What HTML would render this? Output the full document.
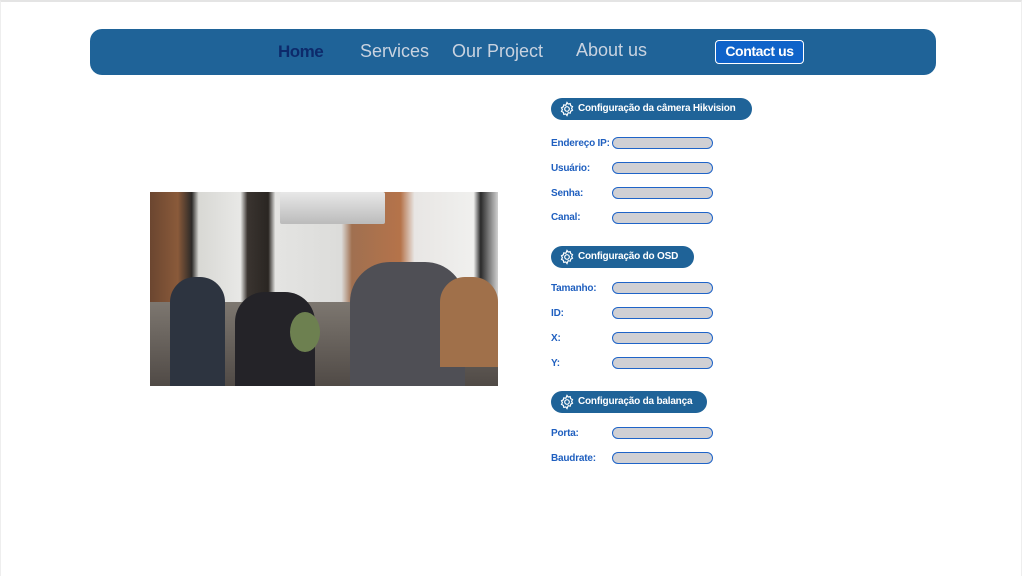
<!DOCTYPE html>
<html><head><style>
*{margin:0;padding:0;box-sizing:border-box}
body{width:1022px;height:576px;background:#fff;font-family:"Liberation Sans",sans-serif;position:relative;overflow:hidden}
.frame{position:absolute;left:0;top:0;width:1022px;height:576px;border-top:2px solid #e4e4e4;border-left:1px solid #eee;border-right:1px solid #eee}
.nav{position:absolute;left:90px;top:29px;width:846px;height:46px;background:#1f6398;border-radius:12px}
.nav span{position:absolute;top:12px;font-size:18px;color:#c9d3e0}
.home{color:#0d2a6b!important;font-weight:bold;font-size:17px!important;letter-spacing:-0.5px}
.contact{position:absolute;left:625px;top:11px;width:89px;height:24px;background:#0f63c9;border:1.5px solid #fff;border-radius:4px;color:#fff;font-weight:bold;font-size:14px;text-align:center;line-height:21px;letter-spacing:-0.4px}
.pill{position:absolute;left:551px;height:22px;background:#1f6398;border-radius:11px;color:#fff;font-weight:bold;font-size:10px;line-height:22px;padding-left:27px;letter-spacing:-0.2px}
.pill svg{position:absolute;left:8px;top:3px}
.lb{position:absolute;left:551px;font-size:10px;font-weight:bold;color:#1f5fbf;letter-spacing:-0.2px}
.in{position:absolute;left:612px;width:101px;height:12px;background:#d0d0d4;border:1.5px solid #1f64c8;border-radius:6px}
.photo{position:absolute;left:150px;top:192px;width:348px;height:194px;overflow:hidden;background:#8a7e74}
.photo div{position:absolute}
</style></head><body>
<div class="frame"></div>
<div class="nav">
<span class="home" style="left:188px;top:13px">Home</span>
<span style="left:270px">Services</span>
<span style="left:362px">Our Project</span>
<span style="left:486px;top:11px">About us</span>
<div class="contact">Contact us</div>
</div>

<div class="photo">
<div style="left:0;top:0;width:348px;height:120px;background:linear-gradient(90deg,#6b4630 0,#8a5a3a 8%,#2c2a28 12%,#d8d8d4 14%,#e8e8e6 26%,#3a3430 28%,#2a2622 34%,#e4e4e2 36%,#dcdcda 55%,#a07050 58%,#b5734a 72%,#e8e6e4 76%,#f0f0ee 93%,#2a2a2a 95%,#d0d0d0 100%)"></div>
<div style="left:130px;top:0;width:105px;height:32px;background:linear-gradient(180deg,#e8e8e8,#bbb);border-radius:2px"></div>
<div style="left:0;top:110px;width:348px;height:84px;background:linear-gradient(180deg,#7d7770,#504a46)"></div>
<div style="left:20px;top:85px;width:55px;height:109px;background:#2d3440;border-radius:25px 25px 0 0"></div>
<div style="left:85px;top:100px;width:80px;height:94px;background:#242328;border-radius:30px 30px 0 0"></div>
<div style="left:200px;top:70px;width:115px;height:124px;background:#4f4f55;border-radius:40px 40px 0 0"></div>
<div style="left:290px;top:85px;width:58px;height:90px;background:#a0704a;border-radius:25px 25px 0 0"></div>
<div style="left:140px;top:120px;width:30px;height:40px;background:#6d8050;border-radius:50%"></div>
</div>

<div class="pill" style="top:98px;width:201px">Configuração da câmera Hikvision<svg width="16" height="16" viewBox="0 0 16 16" fill="none" stroke="#fff" stroke-width="1.2"><circle cx="8" cy="8" r="2.3"/><path d="M8 1.5l1.2 1.6 2-.5.5 2 1.8 1-.9 1.8.9 1.8-1.8 1-.5 2-2-.5L8 14.5l-1.2-1.6-2 .5-.5-2-1.8-1 .9-1.8-.9-1.8 1.8-1 .5-2 2 .5z"/></svg></div>
<div class="lb" style="top:138px">Endereço IP:</div><div class="in" style="top:137px"></div>
<div class="lb" style="top:163px">Usuário:</div><div class="in" style="top:162px"></div>
<div class="lb" style="top:188px">Senha:</div><div class="in" style="top:187px"></div>
<div class="lb" style="top:212px">Canal:</div><div class="in" style="top:212px"></div>

<div class="pill" style="top:246px;width:143px">Configuração do OSD<svg width="16" height="16" viewBox="0 0 16 16" fill="none" stroke="#fff" stroke-width="1.2"><circle cx="8" cy="8" r="2.3"/><path d="M8 1.5l1.2 1.6 2-.5.5 2 1.8 1-.9 1.8.9 1.8-1.8 1-.5 2-2-.5L8 14.5l-1.2-1.6-2 .5-.5-2-1.8-1 .9-1.8-.9-1.8 1.8-1 .5-2 2 .5z"/></svg></div>
<div class="lb" style="top:283px">Tamanho:</div><div class="in" style="top:282px"></div>
<div class="lb" style="top:308px">ID:</div><div class="in" style="top:307px"></div>
<div class="lb" style="top:333px">X:</div><div class="in" style="top:332px"></div>
<div class="lb" style="top:358px">Y:</div><div class="in" style="top:357px"></div>

<div class="pill" style="top:391px;width:156px">Configuração da balança<svg width="16" height="16" viewBox="0 0 16 16" fill="none" stroke="#fff" stroke-width="1.2"><circle cx="8" cy="8" r="2.3"/><path d="M8 1.5l1.2 1.6 2-.5.5 2 1.8 1-.9 1.8.9 1.8-1.8 1-.5 2-2-.5L8 14.5l-1.2-1.6-2 .5-.5-2-1.8-1 .9-1.8-.9-1.8 1.8-1 .5-2 2 .5z"/></svg></div>
<div class="lb" style="top:428px">Porta:</div><div class="in" style="top:427px"></div>
<div class="lb" style="top:453px">Baudrate:</div><div class="in" style="top:452px"></div>
</body></html>
